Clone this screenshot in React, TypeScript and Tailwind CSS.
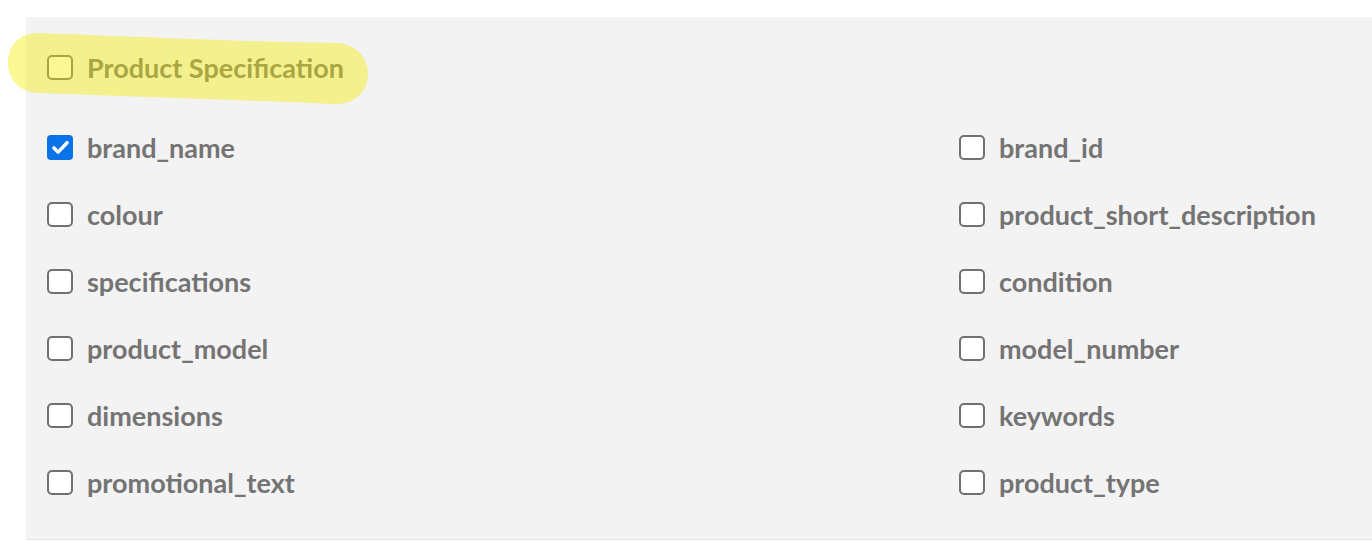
import React from "react"

const left = ["brand_name", "colour", "specifications", "product_model", "dimensions", "promotional_text"]
const right = ["brand_id", "product_short_description", "condition", "model_number", "keywords", "product_type"]

function Box({ checked }: { checked?: boolean }) {
  if (checked) {
    return (
      <span className="flex h-[25px] w-[26px] flex-shrink-0 items-center justify-center rounded-[4px] bg-[#0b73e8]">
        <svg viewBox="0 0 24 24" className="h-[21px] w-[21px]" fill="none">
          <path d="M4.5 12.5l4.8 4.8L19.5 6.5" stroke="white" strokeWidth="4" strokeLinecap="round" strokeLinejoin="round" />
        </svg>
      </span>
    )
  }
  return <span className="h-[25px] w-[26px] flex-shrink-0 rounded-[5px] border-2 border-[#707070] bg-white" />
}

function Field({ name, checked }: { name: string; checked?: boolean }) {
  return (
    <label className="flex h-[67px] items-center gap-[14px]">
      <Box checked={checked} />
      <span className="text-[27px] font-bold leading-none text-[#747474]">{name}</span>
    </label>
  )
}

export default function App() {
  return (
    <div className="relative h-[558px] w-[1372px] overflow-hidden bg-white pt-[17px] font-['Lato','Noto_Sans',sans-serif]">
      <div className="ml-[26px] border-b border-[#e4e4e4] bg-[#f3f3f3] pb-[23px] pl-[21px] pt-[17px]">
        <div className="flex h-[67px] items-center gap-[14px]">
          <Box />
          <span className="text-[27px] font-bold leading-none text-[#747474]">Product Specification</span>
        </div>
        <div className="mt-[13px] grid grid-cols-[912px_1fr]">
          <div className="flex flex-col">
            {left.map((n) => (
              <Field key={n} name={n} checked={n === "brand_name"} />
            ))}
          </div>
          <div className="flex flex-col">
            {right.map((n) => (
              <Field key={n} name={n} />
            ))}
          </div>
        </div>
      </div>
      <svg
        className="pointer-events-none absolute left-0 top-0"
        width="380"
        height="115"
        viewBox="0 0 380 115"
      >
        <path
          d="M38 33 C120 36 250 42 337 43 C356 44 368 58 368 74 C368 92 354 105 334 104 C240 100 120 96 38 93 C20 92 8 80 8 63 C8 45 20 33 38 33 Z"
          fill="rgba(245,235,0,0.42)"
        />
      </svg>
    </div>
  )
}
